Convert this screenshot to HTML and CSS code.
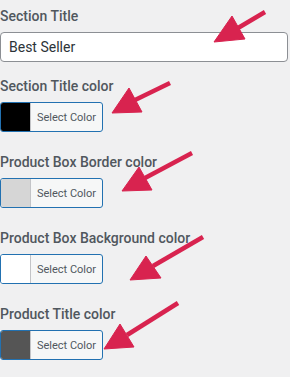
FILE: index.html
```html
<!DOCTYPE html>
<html>
	<head>
		<meta charset="UTF-8">
		<title>Section settings</title>
		<link rel="stylesheet" href="styles.css">
	</head>
	<body>
		<div class="panel">
			<div class="field first">
				<label class="label">Section Title</label>
				<input class="text" type="text" value="Best Seller" />
			</div>
			<div class="field">
				<label class="label">Section Title color</label>
				<button class="picker"><span class="swatch black"></span><span class="pick">Select Color</span></button>
			</div>
			<div class="field">
				<label class="label">Product Box Border color</label>
				<button class="picker"><span class="swatch light"></span><span class="pick">Select Color</span></button>
			</div>
			<div class="field">
				<label class="label">Product Box Background color</label>
				<button class="picker"><span class="swatch white"></span><span class="pick">Select Color</span></button>
			</div>
			<div class="field">
				<label class="label">Product Title color</label>
				<button class="picker"><span class="swatch dark"></span><span class="pick">Select Color</span></button>
			</div>

			<!-- arrows drawn over the form -->
			<svg class="arrows" width="290" height="377" viewBox="0 0 290 377">
				<g stroke="#d8234f" stroke-width="4.5" fill="#d8234f" stroke-linejoin="round">
					<line x1="265" y1="12" x2="238" y2="28" />
					<polygon points="214,42 232,16 245,39" stroke-width="1" />

					<line x1="170" y1="83" x2="135" y2="100" />
					<polygon points="112,113 129,88 142,112" stroke-width="1" />

					<line x1="192" y1="153" x2="145" y2="178" />
					<polygon points="122,191 139,167 152,190" stroke-width="1" />

					<line x1="203" y1="237" x2="153" y2="266" />
					<polygon points="130,280 146,256 161,278" stroke-width="1" />

					<line x1="178" y1="303" x2="127" y2="335" />
					<polygon points="104,349 120,324 134,347" stroke-width="1" />
				</g>
			</svg>
		</div>
	</body>
</html>
```

FILE: styles.css
```css
html,body{
	height: 100%;
	width: 100%;
}
*{
	margin: 0;
	padding: 0;
	box-sizing: border-box;
}
body{
	background: #f0f0f1;
	font-family: Roboto, "Noto Sans", sans-serif;
	color: #50575e;
}
.panel{
	position: relative;
	padding-top: 6px;
	height: 100%;
}
.field{
	display: flex;
	flex-direction: column;
	align-items: flex-start;
	gap: 6px;
	margin-bottom: 20px;
}
.field.first{
	margin-bottom: 14px;
}
.label{
	font-size: 14px;
	line-height: 20px;
	font-weight: 500;
	color: #50575e;
}
.text{
	width: 288px;
	height: 30px;
	border: 1px solid #8c8f94;
	border-radius: 4px;
	background: #fff;
	padding: 0 8px;
	font-family: Roboto, "Noto Sans", sans-serif;
	font-size: 14px;
	color: #2c3338;
	outline: none;
}
.picker{
	display: flex;
	width: 103px;
	height: 30px;
	border: 1px solid #2271b1;
	border-radius: 3px;
	background: #f6f7f7;
	overflow: hidden;
	cursor: pointer;
}
.swatch{
	width: 30px;
	height: 100%;
	border-right: 1px solid #c3c4c7;
}
.black{ background: #000; }
.light{ background: #d6d6d6; }
.white{ background: #fff; }
.dark{ background: #555; }
.pick{
	flex: 1;
	display: flex;
	align-items: center;
	justify-content: center;
	font-family: Roboto, "Noto Sans", sans-serif;
	font-size: 11px;
	color: #50575e;
}
.arrows{
	position: absolute;
	top: 0;
	left: 0;
	pointer-events: none;
}
```
